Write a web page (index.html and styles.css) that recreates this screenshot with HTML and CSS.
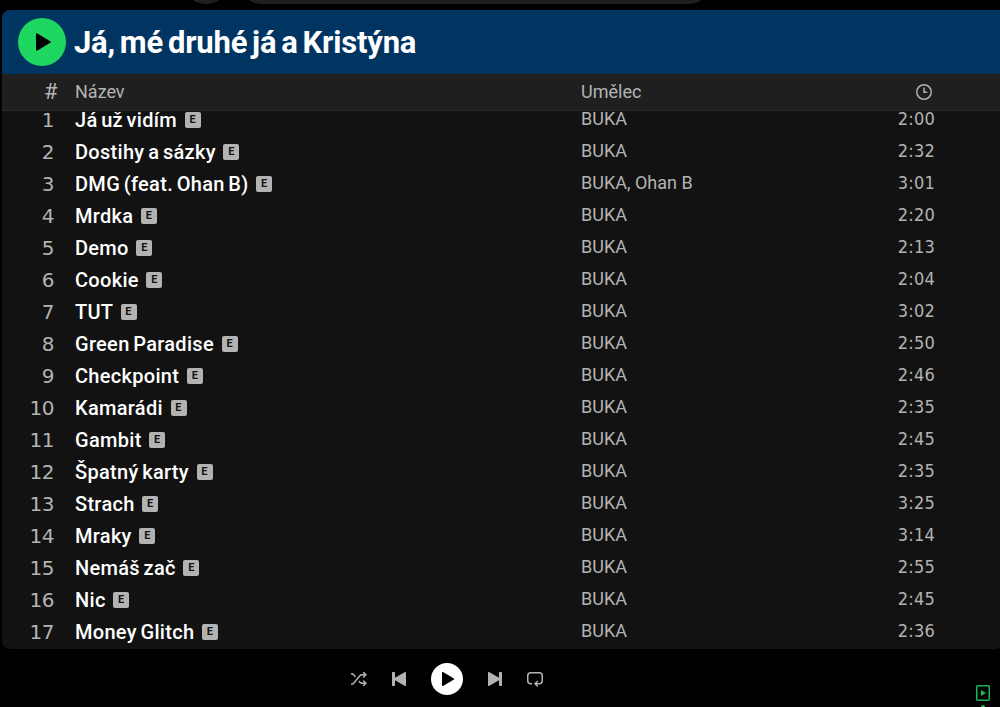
FILE: index.html
```html
<!DOCTYPE html>
<html lang="cs">
<head>
  <meta charset="UTF-8" />
  <meta name="viewport" content="width=device-width, initial-scale=1.0" />
  <title>Já, mé druhé já a Kristýna</title>
  <link rel="stylesheet" href="styles.css">
</head>
<body>
  <header class="topbar">
    <div class="home-button"></div>
    <div class="search-box"></div>
  </header>

  <main class="panel">
    <div class="album-bar">
      <button class="album-play" aria-label="Přehrát">
        <svg width="48" height="48" viewBox="0 0 48 48"><path d="M18 15.9c0-.6.6-.9 1.1-.6L32.6 23.4c.5.3.5.9 0 1.2L19.1 32.7c-.5.3-1.1 0-1.1-.6z" fill="#000"/></svg>
      </button>
      <h1>Já, mé druhé já a Kristýna</h1>
    </div>
    <div class="row table-head">
      <span class="num">#</span>
      <span>Název</span>
      <span>Umělec</span>
      <span class="clock">
        <svg width="16" height="16" viewBox="0 0 16 16" fill="none" stroke="#b0b0b0" stroke-width="1.5"><circle cx="8" cy="8" r="7.25"/><path d="M8 3.6v4.65h3.2"/></svg>
      </span>
    </div>
    <div class="tracks">
      <div class="row"><span class="num">1</span><span class="title">Já už vidím <b>E</b></span><span>BUKA</span><span class="time">2:00</span></div>
      <div class="row"><span class="num">2</span><span class="title">Dostihy a sázky <b>E</b></span><span>BUKA</span><span class="time">2:32</span></div>
      <div class="row"><span class="num">3</span><span class="title">DMG (feat. Ohan B) <b>E</b></span><span>BUKA, Ohan B</span><span class="time">3:01</span></div>
      <div class="row"><span class="num">4</span><span class="title">Mrdka <b>E</b></span><span>BUKA</span><span class="time">2:20</span></div>
      <div class="row"><span class="num">5</span><span class="title">Demo <b>E</b></span><span>BUKA</span><span class="time">2:13</span></div>
      <div class="row"><span class="num">6</span><span class="title">Cookie <b>E</b></span><span>BUKA</span><span class="time">2:04</span></div>
      <div class="row"><span class="num">7</span><span class="title">TUT <b>E</b></span><span>BUKA</span><span class="time">3:02</span></div>
      <div class="row"><span class="num">8</span><span class="title">Green Paradise <b>E</b></span><span>BUKA</span><span class="time">2:50</span></div>
      <div class="row"><span class="num">9</span><span class="title">Checkpoint <b>E</b></span><span>BUKA</span><span class="time">2:46</span></div>
      <div class="row"><span class="num">10</span><span class="title">Kamarádi <b>E</b></span><span>BUKA</span><span class="time">2:35</span></div>
      <div class="row"><span class="num">11</span><span class="title">Gambit <b>E</b></span><span>BUKA</span><span class="time">2:45</span></div>
      <div class="row"><span class="num">12</span><span class="title">Špatný karty <b>E</b></span><span>BUKA</span><span class="time">2:35</span></div>
      <div class="row"><span class="num">13</span><span class="title">Strach <b>E</b></span><span>BUKA</span><span class="time">3:25</span></div>
      <div class="row"><span class="num">14</span><span class="title">Mraky <b>E</b></span><span>BUKA</span><span class="time">3:14</span></div>
      <div class="row"><span class="num">15</span><span class="title">Nemáš zač <b>E</b></span><span>BUKA</span><span class="time">2:55</span></div>
      <div class="row"><span class="num">16</span><span class="title">Nic <b>E</b></span><span>BUKA</span><span class="time">2:45</span></div>
      <div class="row"><span class="num">17</span><span class="title">Money Glitch <b>E</b></span><span>BUKA</span><span class="time">2:36</span></div>
    </div>
  </main>

  <footer class="player">
    <div class="controls">
      <svg width="16" height="16" viewBox="0 0 16 16" fill="#b3b3b3"><path d="M13.151.922a.75.75 0 1 0-1.06 1.06L13.109 3H11.16a3.75 3.75 0 0 0-2.873 1.34l-6.173 7.356A2.25 2.25 0 0 1 .39 12.5H0V14h.391a3.75 3.75 0 0 0 2.873-1.34l6.173-7.356a2.25 2.25 0 0 1 1.724-.804h1.947l-1.017 1.018a.75.75 0 0 0 1.06 1.06L15.98 3.75zM.391 3.5H0V2h.391c1.109 0 2.16.49 2.873 1.34L4.89 5.277l-.979 1.167-1.796-2.14A2.25 2.25 0 0 0 .39 3.5z"/><path d="m7.5 10.723.98-1.167.957 1.14a2.25 2.25 0 0 0 1.724.804h1.947l-1.017-1.018a.75.75 0 1 1 1.06-1.06l2.829 2.828-2.829 2.828a.75.75 0 1 1-1.06-1.06L13.109 13H11.16a3.75 3.75 0 0 1-2.873-1.34z"/></svg>
      <svg width="16" height="16" viewBox="0 0 16 16" fill="#b3b3b3"><path d="M3.3 1a.7.7 0 0 1 .7.7v5.15l9.95-5.744a.7.7 0 0 1 1.05.606v12.575a.7.7 0 0 1-1.05.607L4 9.149V14.3a.7.7 0 0 1-.7.7H1.7a.7.7 0 0 1-.7-.7V1.7a.7.7 0 0 1 .7-.7z"/></svg>
      <button class="play" aria-label="Přehrát">
        <svg width="16" height="16" viewBox="0 0 16 16"><path d="M3 1.713a.7.7 0 0 1 1.05-.607l10.89 6.288a.7.7 0 0 1 0 1.212L4.05 14.894A.7.7 0 0 1 3 14.288z"/></svg>
      </button>
      <svg width="16" height="16" viewBox="0 0 16 16" fill="#b3b3b3"><path d="M12.7 1a.7.7 0 0 0-.7.7v5.15L2.05 1.107A.7.7 0 0 0 1 1.712v12.575a.7.7 0 0 0 1.05.607L12 9.149V14.3a.7.7 0 0 0 .7.7h1.6a.7.7 0 0 0 .7-.7V1.7a.7.7 0 0 0-.7-.7z"/></svg>
      <svg width="16" height="16" viewBox="0 0 16 16" fill="#b3b3b3"><path d="M0 4.75A3.75 3.75 0 0 1 3.75 1h8.5A3.75 3.75 0 0 1 16 4.75v5a3.75 3.75 0 0 1-3.75 3.75H9.81l1.018 1.018a.75.75 0 1 1-1.06 1.06L6.939 12.75l2.829-2.828a.75.75 0 1 1 1.06 1.06L9.811 12h2.439a2.25 2.25 0 0 0 2.25-2.25v-5a2.25 2.25 0 0 0-2.25-2.25h-8.5A2.25 2.25 0 0 0 1.5 4.75v5A2.25 2.25 0 0 0 3.75 12H5v1.5H3.75A3.75 3.75 0 0 1 0 9.75z"/></svg>
    </div>
    <div class="now-playing">
      <svg width="14" height="16" viewBox="0 0 14 16"><rect x=".75" y=".75" width="12.5" height="14.5" rx="1" fill="none" stroke="#1ab955" stroke-width="1.5"/><path d="M5 5v6l5-3z" fill="#1ab955"/></svg>
      <i class="dot"></i>
    </div>
  </footer>
</body>
</html>
```
FILE: styles.css
```css
* {
  box-sizing: border-box;
}
body {
  margin: 0;
  height: 707px;
  overflow: hidden;
  background: #000;
  color: #b3b3b3;
  font-family: Roboto, "Noto Sans", sans-serif;
}
button {
  border: none;
  padding: 0;
  border-radius: 50%;
}
svg {
  display: block;
}
.topbar {
  display: flex;
  align-items: flex-end;
  gap: 16px;
  height: 4px;
  margin-bottom: 6px;
  padding-left: 182px;
}
.home-button, .search-box {
  flex: none;
  width: 48px;
  height: 48px;
  border-radius: 24px;
  background: #1f1f1f;
}
.search-box {
  width: 474px;
  margin-left: -8px;
}
.panel {
  margin-left: 2px;
  height: 639px;
  border-radius: 8px 0 4px 8px;
  overflow: hidden;
  background: #121212;
}
.album-bar {
  display: flex;
  align-items: center;
  gap: 8px;
  height: 64px;
  padding-left: 16px;
  background: #003562;
}
.album-play {
  width: 48px;
  height: 48px;
  background: #1ed760;
}
h1 {
  margin: 0;
  color: #fff;
  font-size: 31px;
  font-weight: 700;
  letter-spacing: -0.2px;
  word-spacing: -2.6px;
  white-space: nowrap;
}
.row {
  display: grid;
  grid-template-columns: 52px 485px 280px 53px;
  column-gap: 21px;
  align-items: center;
  height: 32px;
  font-size: 18px;
}
.table-head {
  height: 37px;
  padding-bottom: 1px;
  background: #1f1f1f;
  border-bottom: 1px solid #2b2b2b;
}
.num {
  padding-top: 4px;
  text-align: right;
  font-family: "DejaVu Sans", sans-serif;
  font-size: 20px;
  letter-spacing: -0.5px;
}
.table-head .num {
  padding: 0;
  margin-right: -3px;
  font-family: Roboto, sans-serif;
  font-size: 22px;
}
.clock {
  justify-self: end;
  margin-right: 3px;
}
.tracks {
  height: 538px;
  margin-top: -9px;
}
.title {
  padding-top: 3px;
  color: #fff;
  font-size: 20px;
  font-weight: 500;
  letter-spacing: 0.3px;
  word-spacing: -1.6px;
  white-space: nowrap;
}
.title b {
  display: inline-block;
  width: 16px;
  height: 16px;
  margin-left: 4px;
  border-radius: 2px;
  background: #b3b3b3;
  color: #121212;
  font-size: 11px;
  line-height: 16px;
  text-align: center;
  vertical-align: 4px;
}
.time {
  text-align: right;
  font-family: "DejaVu Sans", sans-serif;
  font-stretch: condensed;
  letter-spacing: 0.2px;
}
.player {
  position: relative;
  height: 58px;
}
.controls {
  display: flex;
  justify-content: center;
  align-items: center;
  gap: 24px;
  width: 893px;
  height: 60px;
}
.play {
  display: grid;
  place-items: center;
  width: 32px;
  height: 32px;
  background: #fff;
}
.now-playing {
  position: absolute;
  right: 10px;
  top: 36px;
}
.dot {
  display: block;
  width: 4px;
  height: 4px;
  margin: 4px auto 0;
  border-radius: 50%;
  background: #1ab955;
}
```
